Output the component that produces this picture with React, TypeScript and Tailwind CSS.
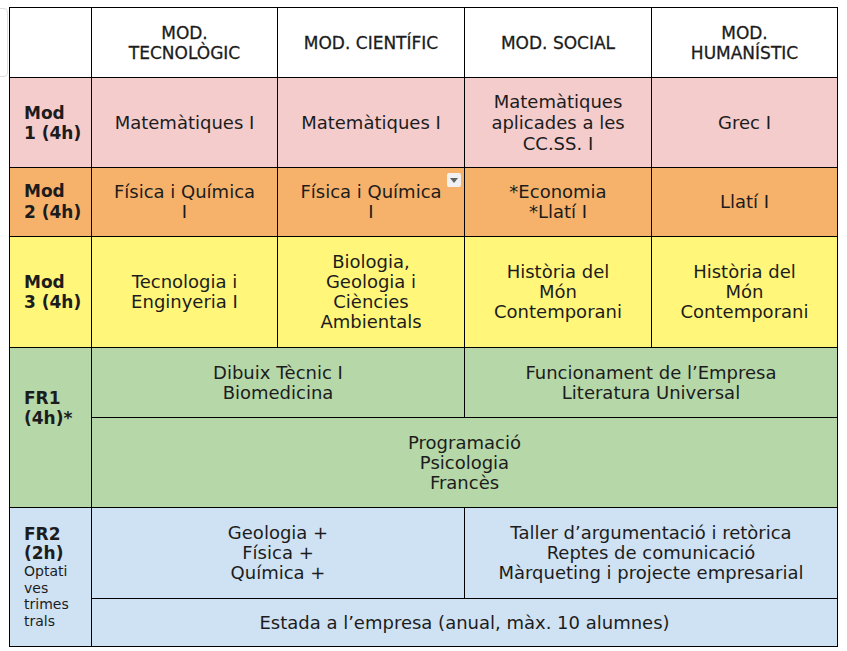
const font = { fontFamily: '"DejaVu Sans", "Noto Sans", sans-serif' };

function Cell({
  className = "",
  children,
}: {
  className?: string;
  children: React.ReactNode;
}) {
  return (
    <div
      className={`flex items-center justify-center text-center text-[18px] leading-[20px] text-[#1c1c1c] ${className}`}
    >
      <div>{children}</div>
    </div>
  );
}

function Label({
  className = "",
  children,
}: {
  className?: string;
  children: React.ReactNode;
}) {
  return (
    <div
      className={`flex items-center pl-[14px] text-[17px] font-bold leading-[20px] text-[#1c1c1c] ${className}`}
    >
      <div>{children}</div>
    </div>
  );
}

function Header({ children }: { children: React.ReactNode }) {
  return (
    <div className="flex items-center justify-center bg-white text-center text-[17px] leading-[20px] text-[#1c1c1c] [-webkit-text-stroke:0.3px_#1c1c1c]">
      <div>{children}</div>
    </div>
  );
}

export default function App() {
  return (
    <div className="relative h-[651px] w-[847px] overflow-hidden bg-white" style={font}>
      {/* faint sheet outline on the left edge */}
      <div className="absolute left-[-12px] top-[8px] h-[69px] w-[20px] rounded-[4px] border border-[#dedede]" />

      <div className="pl-[9px] pt-[7px]">
        <div className="grid w-[829px] grid-cols-[81px_185px_186px_186px_185px] grid-rows-[69px_89px_68px_110px_69px_89px_90px_47px] gap-px bg-black p-px">
          {/* header */}
          <div className="bg-white" />
          <Header>
            MOD.
            <br />
            TECNOLÒGIC
          </Header>
          <Header>MOD. CIENTÍFIC</Header>
          <Header>MOD. SOCIAL</Header>
          <Header>
            MOD.
            <br />
            HUMANÍSTIC
          </Header>

          {/* Mod 1 */}
          <Label className="bg-[#f4cccc] leading-[17px]">
            Mod
            <br />1 (4h)
          </Label>
          <Cell className="bg-[#f4cccc]">Matemàtiques I</Cell>
          <Cell className="bg-[#f4cccc]">Matemàtiques I</Cell>
          <Cell className="bg-[#f4cccc] leading-[21px]">
            Matemàtiques
            <br />
            aplicades a les
            <br />
            CC.SS. I
          </Cell>
          <Cell className="bg-[#f4cccc]">Grec I</Cell>

          {/* Mod 2 */}
          <Label className="bg-[#f6b26b] leading-[21px]">
            Mod
            <br />2 (4h)
          </Label>
          <Cell className="bg-[#f6b26b]">
            Física i Química
            <br />I
          </Cell>
          <div className="relative flex items-center justify-center bg-[#f6b26b] text-center text-[18px] leading-[20px] text-[#1c1c1c]">
            <div>
              Física i Química
              <br />I
            </div>
            <div className="absolute right-[3px] top-[5px] flex h-[14px] w-[14px] items-center justify-center rounded-[2px] bg-[#f1f1f1]">
              <svg width="8" height="5" viewBox="0 0 8 5">
                <path d="M0 0h8L4 5z" fill="#5f6368" />
              </svg>
            </div>
          </div>
          <Cell className="bg-[#f6b26b]">
            *Economia
            <br />
            *Llatí I
          </Cell>
          <Cell className="bg-[#f6b26b]">Llatí I</Cell>

          {/* Mod 3 */}
          <Label className="bg-[#fff67a]">
            Mod
            <br />3 (4h)
          </Label>
          <Cell className="bg-[#fff67a]">
            Tecnologia i
            <br />
            Enginyeria I
          </Cell>
          <Cell className="bg-[#fff67a]">
            Biologia,
            <br />
            Geologia i
            <br />
            Ciències
            <br />
            Ambientals
          </Cell>
          <Cell className="bg-[#fff67a]">
            Història del
            <br />
            Món
            <br />
            Contemporani
          </Cell>
          <Cell className="bg-[#fff67a]">
            Història del
            <br />
            Món
            <br />
            Contemporani
          </Cell>

          {/* FR1 */}
          <Label className="row-span-2 bg-[#b6d7a8] pb-[40px]">
            FR1
            <br />
            (4h)*
          </Label>
          <Cell className="col-span-2 bg-[#b6d7a8]">
            Dibuix Tècnic I
            <br />
            Biomedicina
          </Cell>
          <Cell className="col-span-2 bg-[#b6d7a8]">
            Funcionament de l’Empresa
            <br />
            Literatura Universal
          </Cell>
          <Cell className="col-span-4 bg-[#b6d7a8]">
            Programació
            <br />
            Psicologia
            <br />
            Francès
          </Cell>

          {/* FR2 */}
          <div className="row-span-2 flex items-center bg-[#cfe2f3] pl-[14px] text-[#1c1c1c]">
            <div>
              <div className="text-[17px] font-bold leading-[19px]">
                FR2
                <br />
                (2h)
              </div>
              <div className="text-[14px] leading-[16.5px]">
                Optati
                <br />
                ves
                <br />
                trimes
                <br />
                trals
              </div>
            </div>
          </div>
          <Cell className="col-span-2 bg-[#cfe2f3]">
            Geologia +
            <br />
            Física +
            <br />
            Química +
          </Cell>
          <Cell className="col-span-2 bg-[#cfe2f3]">
            Taller d’argumentació i retòrica
            <br />
            Reptes de comunicació
            <br />
            Màrqueting i projecte empresarial
          </Cell>
          <Cell className="col-span-4 bg-[#cfe2f3]">
            Estada a l’empresa (anual, màx. 10 alumnes)
          </Cell>
        </div>
      </div>
    </div>
  );
}
